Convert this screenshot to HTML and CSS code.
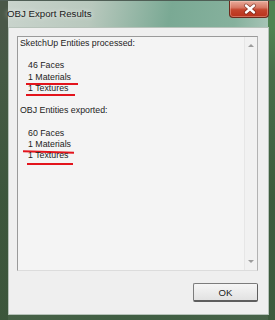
FILE: index.html
```html
<!DOCTYPE html>
<html>
	<head>
		<meta charset="UTF-8">
		<title>OBJ Export Results</title>
		<link rel="stylesheet" href="styles.css">
	</head>
	<body>
		<div class="window">
			<div class="titlebar">
				<span class="title">OBJ Export Results</span>
				<a href="#" class="close">
					<svg width="40" height="16" viewBox="0 0 40 16">
						<path d="M16 4.5 L24 11.5 M24 4.5 L16 11.5" stroke="#5a1c10" stroke-width="4" stroke-linecap="round" opacity="0.6"/>
						<path d="M16 4.5 L24 11.5 M24 4.5 L16 11.5" stroke="#fff" stroke-width="2.4" stroke-linecap="round"/>
					</svg>
				</a>
			</div>
			<div class="client">
				<div class="textbox">
					<div class="text">
						<div class="line">SketchUp Entities processed:</div>
						<div class="line"></div>
						<div class="line sub">46 Faces</div>
						<div class="line sub"><span class="mark">1 Materials</span></div>
						<div class="line sub"><span class="mark">1 Textures</span></div>
						<div class="line"></div>
						<div class="line">OBJ Entities exported:</div>
						<div class="line"></div>
						<div class="line sub">60 Faces</div>
						<div class="line sub"><span class="mark mark-tilt">1 Materials</span></div>
						<div class="line sub"><span class="mark mark-low">1 Textures</span></div>
					</div>
					<div class="scroll">
						<span class="arrow-up"></span>
						<span class="arrow-down"></span>
					</div>
				</div>
				<div class="buttons">
					<a href="#" class="btn">OK</a>
				</div>
			</div>
		</div>
	</body>
</html>
```

FILE: styles.css
```css
* {
	margin:0;
	padding:0;
	box-sizing:border-box;
}
body {
	width:275px;
	height:320px;
	overflow:hidden;
	font-family:"Liberation Sans", Arial, sans-serif;
}
a {
	text-decoration:none;
	color:inherit;
}
.window {
	width:275px;
	height:320px;
	display:flex;
	flex-direction:column;
	border-top:1px solid #4f5e55;
	background:
		linear-gradient(to bottom, rgba(0,0,0,0) 26px, rgba(66,92,66,0.55) 70px, rgba(58,86,58,0.9) 200px),
		linear-gradient(to right, #4a5848 0, #4a5848 8px, rgba(0,0,0,0) 8px, rgba(0,0,0,0) 268px, #4f8452 268px),
		linear-gradient(100deg, #cbd5ce 0%, #b8c8bd 28%, #7aa994 52%, #86b19d 72%, #b9cfc4 88%, #d0dcd4 100%);
}
	.titlebar {
		height:26px;
		display:flex;
		justify-content:space-between;
		align-items:flex-start;
		padding:0 6px 0 7px;
	}
		.title {
			margin-top:7px;
			font-size:9.7px;
			line-height:12px;
			color:#1b1b1b;
			text-shadow:0 0 5px rgba(255,255,255,0.9);
		}
		.close {
			display:block;
			width:40px;
			height:17px;
			border:1px solid #6b2a1c;
			border-top:none;
			border-radius:0 0 4px 4px;
			background:linear-gradient(to bottom, #e9ab9b 0%, #d77a66 40%, #c4452d 55%, #b9321b 100%);
			box-shadow:inset 0 0 0 1px rgba(255,220,210,0.35);
		}
			.close svg {
				display:block;
			}
	.client {
		flex:1;
		margin:0 6px 5px 8px;
		border:1px solid #b6c2b9;
		background:#efefef;
		display:flex;
		flex-direction:column;
		gap:12px;
		padding:8px 10px 12px 8px;
	}
		.textbox {
			flex:1;
			display:flex;
			border-top:1px solid #9a9a9a;
			border-left:1px solid #9a9a9a;
			border-right:1px solid #b2b2b2;
			border-bottom:1px solid #dcdcdc;
			background:#f4f4f4;
		}
			.text {
				flex:1;
				padding:1px 0 0 2px;
				font-size:8.8px;
				line-height:11.2px;
				color:#1c1c1c;
			}
				.line {
					height:11.2px;
					white-space:nowrap;
				}
				.sub {
					padding-left:8px;
				}
				.mark {
					position:relative;
				}
					.mark::after {
						content:'';
						position:absolute;
						left:-2px;
						right:-7px;
						bottom:-3px;
						height:2px;
						background:#e3141c;
					}
					.mark-tilt::after {
						left:-5px;
						right:-3px;
						bottom:-4px;
						transform:rotate(1.5deg);
					}
					.mark-low::after {
						left:-1px;
						right:-5px;
						bottom:-5px;
					}
			.scroll {
				width:13px;
				border-left:1px solid #e6e6e6;
				background:#f1f1f1;
				display:flex;
				flex-direction:column;
				justify-content:space-between;
				align-items:center;
				padding:7px 0 7px;
			}
				.arrow-up {
					width:0;
					height:0;
					border-left:3px solid transparent;
					border-right:3px solid transparent;
					border-bottom:3px solid #9c9c9c;
				}
				.arrow-down {
					width:0;
					height:0;
					border-left:3px solid transparent;
					border-right:3px solid transparent;
					border-top:3px solid #9c9c9c;
				}
		.buttons {
			display:flex;
			justify-content:flex-end;
		}
			.btn {
				width:65px;
				height:19px;
				display:flex;
				align-items:center;
				justify-content:center;
				border:1px solid #7c7c7c;
				border-right-color:#5e5e5e;
				border-bottom:2px solid #5e5e5e;
				border-radius:2px;
				background:linear-gradient(to bottom, #f6f6f6 0%, #ececec 50%, #e2e2e2 100%);
				font-size:9.6px;
				color:#222;
			}
```
